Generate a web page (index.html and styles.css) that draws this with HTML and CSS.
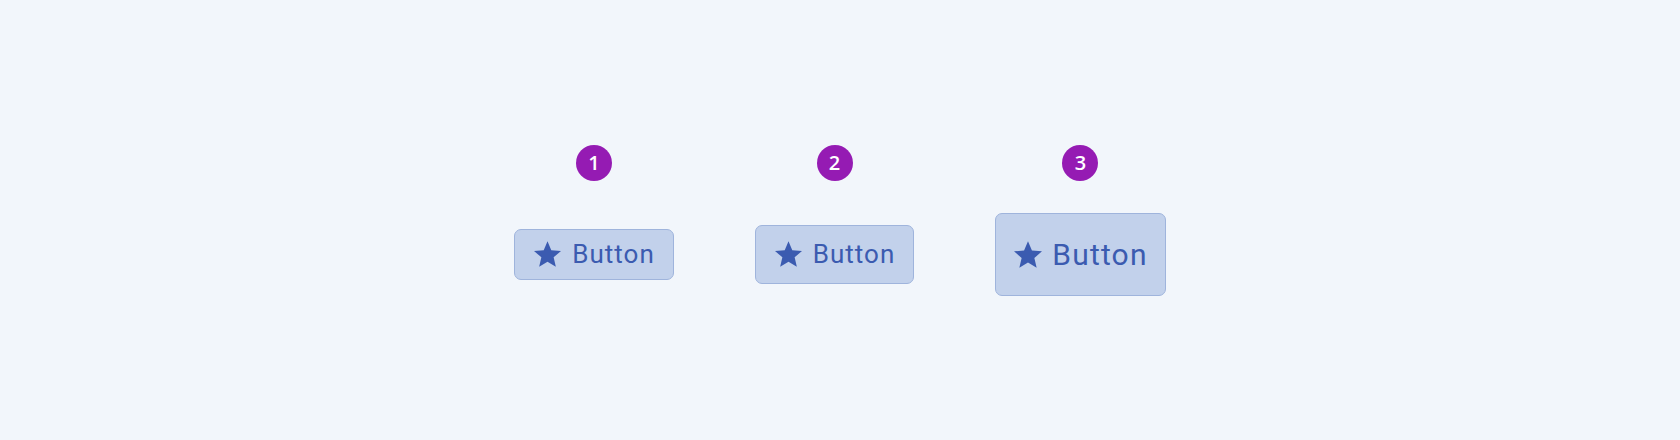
FILE: index.html
```html
<!DOCTYPE html>
<html lang="en">
<head>
<meta charset="utf-8">
<title>Buttons</title>
<link rel="stylesheet" href="styles.css">
</head>
<body>
<main class="stage">
  <div class="grid">
    <span class="badge">1</span>
    <span class="badge">2</span>
    <span class="badge">3</span>
    <button class="btn btn-sm" type="button">
      <svg class="star" viewBox="2 2 20 19" aria-hidden="true"><path d="M12 17.27L18.18 21l-1.64-7.03L22 9.24l-7.19-.61L12 2 9.19 8.63 2 9.24l5.46 4.73L5.82 21z"/></svg>
      <span class="label">Button</span>
    </button>
    <button class="btn btn-md" type="button">
      <svg class="star" viewBox="2 2 20 19" aria-hidden="true"><path d="M12 17.27L18.18 21l-1.64-7.03L22 9.24l-7.19-.61L12 2 9.19 8.63 2 9.24l5.46 4.73L5.82 21z"/></svg>
      <span class="label">Button</span>
    </button>
    <button class="btn btn-lg" type="button">
      <svg class="star" viewBox="2 2 20 19" aria-hidden="true"><path d="M12 17.27L18.18 21l-1.64-7.03L22 9.24l-7.19-.61L12 2 9.19 8.63 2 9.24l5.46 4.73L5.82 21z"/></svg>
      <span class="label">Button</span>
    </button>
  </div>
</main>
</body>
</html>
```
FILE: styles.css
```css
html, body {
  margin: 0;
  padding: 0;
  background: #f2f6fb;
}

.stage {
  height: 440px;
  display: flex;
  align-items: center;
  justify-content: center;
}

.grid {
  display: grid;
  grid-template-columns: auto auto auto;
  grid-template-rows: 36px auto;
  column-gap: 81px;
  row-gap: 32px;
  justify-items: center;
  align-items: center;
}

.badge {
  width: 36px;
  height: 36px;
  border-radius: 50%;
  background: #951bb3;
  color: #ffffff;
  font-family: "Open Sans", "Noto Sans", sans-serif;
  font-weight: 600;
  font-size: 20px;
  line-height: 36px;
  text-align: center;
}

.btn {
  display: inline-flex;
  align-items: center;
  gap: 11px;
  margin: 0;
  background: #c2d1eb;
  border: 1px solid #9fb4dc;
  border-radius: 7px;
  color: #3b5bb0;
  font-family: Roboto, "Liberation Sans", sans-serif;
  font-weight: 400;
  font-size: 26px;
  line-height: 29px;
  letter-spacing: 1px;
  padding: 10px 18px 10px 19px;
  cursor: pointer;
}

.btn-md {
  padding-top: 14px;
  padding-bottom: 14px;
}

.btn-lg {
  font-size: 30px;
  line-height: 33px;
  letter-spacing: 1.2px;
  gap: 10px;
  padding: 24px 17px 24px 18px;
}

.label {
  display: block;
}

.star {
  width: 27px;
  height: 26px;
  fill: currentColor;
  flex: none;
}

.btn-lg .star {
  width: 28px;
  height: 27px;
}
```
